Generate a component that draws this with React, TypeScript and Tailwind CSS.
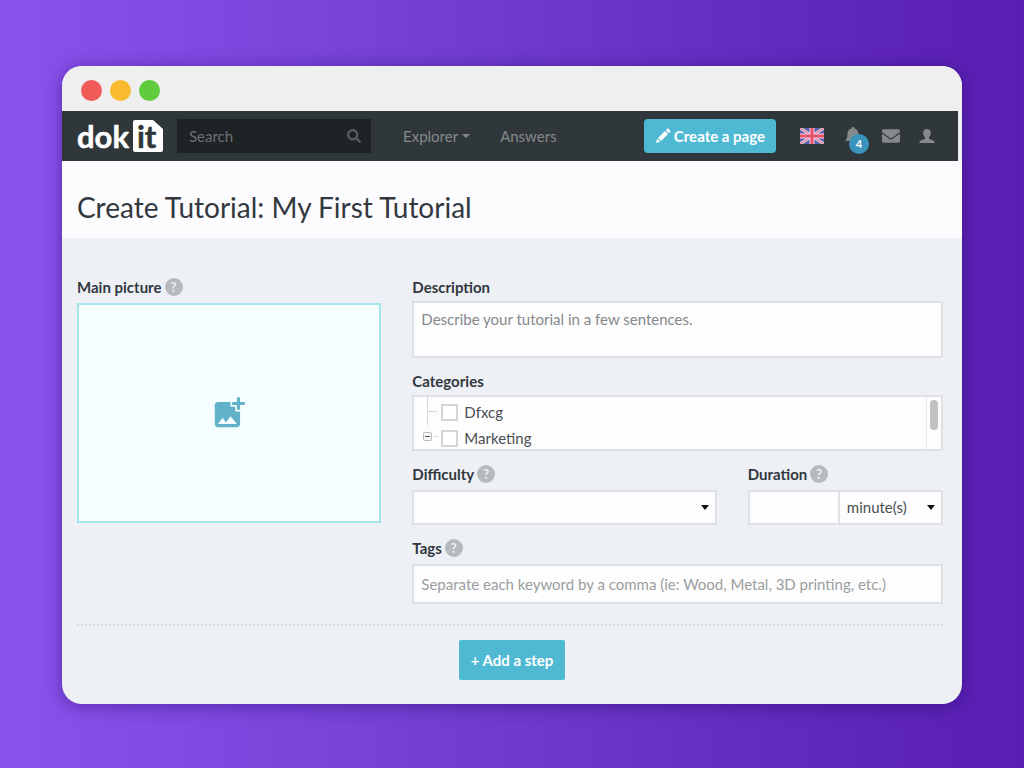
import type { ReactNode } from 'react';
import { FaSearch, FaEnvelope } from 'react-icons/fa';
import { MdAddPhotoAlternate } from 'react-icons/md';

const CATEGORIES = [
  { id: 'dfxcg', label: 'Dfxcg', expandable: false },
  { id: 'marketing', label: 'Marketing', expandable: true },
];

const fieldBox = 'w-full border-2 border-[#dfe1e4] bg-[#fdfdfe] text-[15px] text-[#4a4f54] outline-none';

export default function App() {
  return (
    <div className="min-h-screen bg-[linear-gradient(90deg,#8b52ee_0%,#7440d4_40%,#6028bc_80%,#591eb2_100%)] px-[62px] py-[66px] font-['Lato',sans-serif]">
      <div className="overflow-hidden rounded-[20px] bg-[#edf0f5] shadow-[0_2px_18px_rgba(30,0,90,0.45)]">
        {/* Window bar */}
        <div className="flex h-[45px] items-center gap-2 bg-[#efefef] px-[19px] pt-1">
          <span className="size-[21px] rounded-full bg-[#f05b57]" />
          <span className="size-[21px] rounded-full bg-[#f9bb2d]" />
          <span className="size-[21px] rounded-full bg-[#5fcb3d]" />
        </div>

        <Navbar />

        {/* Title */}
        <div className="bg-[#fcfcfe] px-[15px] pt-7 pb-[13px]">
          <h1 className="text-[28px] leading-9 text-[#32383e]">Create Tutorial: My First Tutorial</h1>
        </div>

        <TutorialForm />
      </div>
    </div>
  );
}

/* ─── Navbar ─────────────────────────────────────────── */

function Navbar() {
  return (
    <nav className="mr-1 flex h-[50px] items-center bg-[#30373a] pr-[23px] pl-[14px] text-[15px] text-[#85898b]">
      <a href="#" aria-label="dokit">
        <Logo />
      </a>

      <div className="relative ml-[13px] w-[194px]">
        <input
          type="text"
          aria-label="Search"
          placeholder="Search"
          className="h-[34px] w-full bg-[#1e2326] pr-9 pl-3 text-[#85898b] outline-none placeholder:text-[#6c7072]"
        />
        <FaSearch className="absolute top-2.5 right-2.5 size-[14px] text-[#585d60]" />
      </div>

      <a href="#" className="ml-8 flex items-center gap-1">
        Explorer
        <svg viewBox="0 0 8 4" className="h-1 w-2" fill="currentColor">
          <path d="M0 0h8L4 4z" />
        </svg>
      </a>
      <a href="#" className="ml-[30px]">Answers</a>

      <button type="button" className="ml-auto flex h-[34px] items-center gap-[3px] rounded-[4px] bg-[#4fb9d3] px-[11px] font-bold text-white">
        <svg viewBox="0 0 16 16" className="size-4" fill="currentColor">
          <path d="M1 15l1.2-4.2 3 3zM3 10l7-7 3 3-7 7zM10.8 2.2l1.4-1.4c.4-.4 1-.4 1.4 0l1.6 1.6c.4.4.4 1 0 1.4l-1.4 1.4z" />
        </svg>
        Create a page
      </button>

      <button type="button" aria-label="English" className="ml-6">
        <UnionJack />
      </button>
      <button type="button" aria-label="Notifications" className="relative ml-[21px]">
        <svg viewBox="0 0 16 18" className="h-[18px] w-4" fill="currentColor">
          <path d="M8 0c.9 0 1.600.7 1.600 1.600C12.200 2.300 13.600 4.600 13.600 7.500c0 3 .8 4.800 2.400 6.500H0c1.600-1.700 2.400-3.500 2.400-6.500 0-2.900 1.400-5.200 4-5.900C6.400.7 7.100 0 8 0zM6 15h4c0 1.300-.9 2-2 2s-2-.7-2-2z" />
        </svg>
        <span className="absolute top-[7px] left-[4px] flex size-5 items-center justify-center rounded-full bg-[#3993bd] text-[11px] font-bold text-white">
          4
        </span>
      </button>
      <button type="button" aria-label="Messages" className="ml-[21px]">
        <FaEnvelope className="size-[18px]" />
      </button>
      <button type="button" aria-label="Account" className="ml-[19px]">
        <svg viewBox="0 0 16 16" className="size-4" fill="currentColor">
          <path d="M8 1c2.400 0 3.800 1.600 3.800 4 0 1.700-.7 3.300-1.800 4.200v1.100c0 .5.3.8.8 1l3.400 1.300c.9.400 1.300.9 1.300 1.700V15H.5v-.7c0-.8.4-1.300 1.300-1.700l3.400-1.300c.5-.2.8-.5.8-1V9.200C4.900 8.300 4.200 6.700 4.200 5c0-2.400 1.400-4 3.800-4z" />
        </svg>
      </button>
    </nav>
  );
}

function Logo() {
  return (
    <svg viewBox="0 -3 88 42" className="h-[42px] w-[88px]" fontFamily="Lato, sans-serif" fontWeight="700">
      <text x="1" y="30" fontSize="31" fill="#fff" stroke="#fff" strokeWidth=".5" strokeLinejoin="round">dok</text>
      <path d="M59 2h18l10 9v21a2 2 0 0 1-2 2H59a2 2 0 0 1-2-2V4a2 2 0 0 1 2-2z" fill="#fff" />
      <text x="61" y="30" fontSize="31" fill="#30373a" stroke="#30373a" strokeWidth=".5" strokeLinejoin="round">it</text>
    </svg>
  );
}

function UnionJack() {
  return (
    <svg viewBox="0 0 24 16" className="h-4 w-6">
      <path d="M0 0h24v16H0z" fill="#5a5fae" />
      <path d="M0 0l24 16M24 0L0 16" stroke="#e8cfe2" strokeWidth="3" />
      <path d="M0 0l24 16M24 0L0 16" stroke="#e0627e" strokeWidth="1" />
      <path d="M12 0v16M0 8h24" stroke="#ecd2e0" strokeWidth="5" />
      <path d="M12 0v16M0 8h24" stroke="#e8506a" strokeWidth="3" />
    </svg>
  );
}

/* ─── Form ───────────────────────────────────────────── */

function TutorialForm() {
  return (
    <form className="pt-[39px] pb-6">
      <div className="pr-[19px] pl-[15px]">
        <div className="grid grid-cols-[304fr_530fr] items-start gap-[31px]">
          {/* Left: picture */}
          <div>
            <FieldLabel htmlFor="picture" help>Main picture</FieldLabel>
            <button
              id="picture"
              type="button"
              aria-label="Add main picture"
              className="mt-1.5 flex h-[220px] w-full items-center justify-center border-2 border-[#a3e5ea] bg-[#f5feff]"
            >
              <MdAddPhotoAlternate className="size-[38px] text-[#62b3ca]" />
            </button>
          </div>

          {/* Right: details */}
          <div className="flex min-w-0 flex-col gap-[13px]">
            <div>
              <FieldLabel htmlFor="description">Description</FieldLabel>
              <textarea
                id="description"
                placeholder="Describe your tutorial in a few sentences."
                className={`${fieldBox} mt-1 block h-[57px] resize-none px-[7px] py-1.5 leading-5 placeholder:text-[#85888b]`}
              />
            </div>

            <div>
              <FieldLabel>Categories</FieldLabel>
              <CategoryTree />
            </div>

            <div className="grid grid-cols-[304fr_195fr] gap-[31px]">
              <div>
                <FieldLabel htmlFor="difficulty" help>Difficulty</FieldLabel>
                <div className="relative mt-1.5">
                  <select id="difficulty" className={`${fieldBox} block h-[35px] appearance-none px-2`}>
                    <option value=""></option>
                  </select>
                  <Caret />
                </div>
              </div>
              <div>
                <FieldLabel htmlFor="duration" help>Duration</FieldLabel>
                <div className="mt-1.5 grid grid-cols-[90fr_105fr]">
                  <input id="duration" type="text" className={`${fieldBox} h-[35px] border-r-0 px-2`} />
                  <div className="relative">
                    <select aria-label="Duration unit" className={`${fieldBox} block h-[35px] appearance-none pl-[7px]`}>
                      <option>minute(s)</option>
                    </select>
                    <Caret />
                  </div>
                </div>
              </div>
            </div>

            <div>
              <FieldLabel htmlFor="tags" help>Tags</FieldLabel>
              <input
                id="tags"
                type="text"
                placeholder="Separate each keyword by a comma (ie: Wood, Metal, 3D printing, etc.)"
                className={`${fieldBox} mt-1.5 block h-10 px-[7px] placeholder:text-[#9b9da0]`}
              />
            </div>
          </div>
        </div>

        <hr className="mt-5 border-t-2 border-dotted border-[#d9dcdf]" />
      </div>

      <div className="mt-[14px] flex justify-center">
        <button type="button" className="h-10 rounded-[2px] bg-[#4fb9d3] px-3 text-[15px] font-bold text-white">
          + Add a step
        </button>
      </div>
    </form>
  );
}

function FieldLabel({ htmlFor, help, children }: { htmlFor?: string; help?: boolean; children: ReactNode }) {
  return (
    <div className="flex h-5 items-center gap-[3px]">
      <label htmlFor={htmlFor} className="text-[15px] leading-5 font-bold text-[#32383e]">{children}</label>
      {help && (
        <span className="flex size-[18px] items-center justify-center rounded-full bg-[#b7babd] text-[13px] leading-none font-bold text-[#edf0f5]">
          ?
        </span>
      )}
    </div>
  );
}

function Caret() {
  return (
    <svg viewBox="0 0 8 5" className="pointer-events-none absolute top-[15px] right-2 h-[5px] w-2" fill="#111">
      <path d="M0 0h8L4 5z" />
    </svg>
  );
}

function CategoryTree() {
  return (
    <div className="mt-1 flex h-14 overflow-hidden border-2 border-[#dfe1e4] bg-[#fdfdfe]">
      <ul className="flex-1 pt-0.5 pl-2">
        {CATEGORIES.map((c) => (
          <li key={c.id} className="flex h-[26px] items-center">
            {c.expandable ? (
              <svg viewBox="0 0 19 26" className="h-[26px] w-[19px]" fill="none">
                <rect x="1.500" y="7.500" width="8" height="8" rx="1" fill="#f4f4f4" stroke="#bbb" />
                <path d="M3 11.500h5" stroke="#555" />
                <path d="M11 11.500h5" stroke="#d8d8d8" strokeDasharray="2 1" />
              </svg>
            ) : (
              <svg viewBox="0 0 19 26" className="h-[26px] w-[19px] overflow-visible" fill="none" stroke="#d4d5d7">
                <path d="M5.500-4v30M6 12.500h9" />
              </svg>
            )}
            <input id={c.id} type="checkbox" className="size-[17px] appearance-none border-2 border-[#d3d5d7] bg-white" />
            <label htmlFor={c.id} className="pl-1.5 text-[15px] text-[#4a4f54]">{c.label}</label>
          </li>
        ))}
      </ul>
      <div className="w-[15px] border-l border-[#ebebeb] pt-[3px] pl-[3px]">
        <div className="h-[30px] w-2 rounded-full bg-[#c1c1c1]" />
      </div>
    </div>
  );
}
